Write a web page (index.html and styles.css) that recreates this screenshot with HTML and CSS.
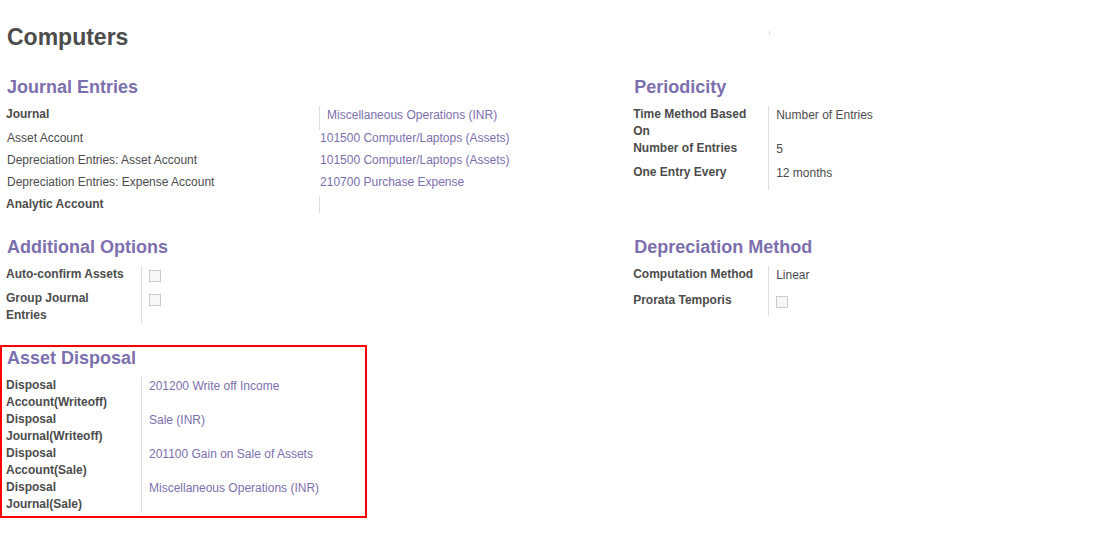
FILE: index.html
```html
<!DOCTYPE html>
<html lang="en">
<head>
<meta charset="utf-8">
<title>Computers</title>
<link rel="stylesheet" href="styles.css">
</head>
<body>
<main class="sheet">
  <header class="columns sheet-header">
    <h1 class="title">Computers</h1>
    <div class="empty-group"></div>
  </header>
  <div class="columns groups">
    <section class="group group-wide">
      <h2 class="group-title">Journal Entries</h2>
      <dl class="fields">
        <div class="field"><dt class="label">Journal</dt><dd class="value"><a class="link" href="#">Miscellaneous Operations (INR)</a></dd></div>
        <div class="field field-plain"><dt class="label">Asset Account</dt><dd class="value"><a class="link" href="#">101500 Computer/Laptops (Assets)</a></dd></div>
        <div class="field field-plain"><dt class="label">Depreciation Entries: Asset Account</dt><dd class="value"><a class="link" href="#">101500 Computer/Laptops (Assets)</a></dd></div>
        <div class="field field-plain"><dt class="label">Depreciation Entries: Expense Account</dt><dd class="value"><a class="link" href="#">210700 Purchase Expense</a></dd></div>
        <div class="field field-empty"><dt class="label">Analytic Account</dt><dd class="value"></dd></div>
      </dl>
    </section>
    <section class="group">
      <h2 class="group-title">Periodicity</h2>
      <dl class="fields">
        <div class="field"><dt class="label">Time Method Based On</dt><dd class="value">Number of Entries</dd></div>
        <div class="field"><dt class="label">Number of Entries</dt><dd class="value">5</dd></div>
        <div class="field field-tall"><dt class="label">One Entry Every</dt><dd class="value">12 months</dd></div>
      </dl>
    </section>
    <section class="group">
      <h2 class="group-title">Additional Options</h2>
      <div class="fields">
        <div class="field"><label class="label" for="auto-confirm">Auto-confirm Assets</label><div class="value"><input class="check" type="checkbox" id="auto-confirm"></div></div>
        <div class="field"><label class="label" for="group-journal">Group Journal Entries</label><div class="value"><input class="check" type="checkbox" id="group-journal"></div></div>
      </div>
    </section>
    <section class="group">
      <h2 class="group-title">Depreciation Method</h2>
      <div class="fields">
        <div class="field field-tall"><span class="label">Computation Method</span><div class="value">Linear</div></div>
        <div class="field"><label class="label" for="prorata">Prorata Temporis</label><div class="value"><input class="check" type="checkbox" id="prorata"></div></div>
      </div>
    </section>
    <section class="group group-marked">
      <h2 class="group-title">Asset Disposal</h2>
      <dl class="fields">
        <div class="field"><dt class="label">Disposal Account(Writeoff)</dt><dd class="value"><a class="link" href="#">201200 Write off Income</a></dd></div>
        <div class="field"><dt class="label">Disposal Journal(Writeoff)</dt><dd class="value"><a class="link" href="#">Sale (INR)</a></dd></div>
        <div class="field"><dt class="label">Disposal Account(Sale)</dt><dd class="value"><a class="link" href="#">201100 Gain on Sale of Assets</a></dd></div>
        <div class="field"><dt class="label">Disposal Journal(Sale)</dt><dd class="value"><a class="link" href="#">Miscellaneous Operations (INR)</a></dd></div>
      </dl>
    </section>
  </div>
</main>
</body>
</html>
```
FILE: styles.css
```css
* {
  box-sizing: border-box;
}

body {
  margin: 0;
  background: #fff;
  color: #4c4c4c;
  font: 12px/17px "Liberation Sans", Arial, sans-serif;
}

.sheet {
  padding: 23px 0 16px 6px;
}

.columns {
  display: grid;
  grid-template-columns: 30fr 23fr;
}

.sheet-header {
  margin-bottom: 25px;
}

.title {
  margin: 0;
  padding-left: 1px;
  font-size: 23px;
  line-height: 28px;
}

.empty-group {
  height: 4px;
  margin: 8px 0 0 136px;
  border-left: 1px solid #ddd;
}

.groups {
  row-gap: 23px;
  align-items: start;
}

.group-title {
  margin: 0 0 8px;
  padding-left: 1px;
  color: #7c6fae;
  font-size: 18px;
  line-height: 22px;
}

.fields {
  margin: 0;
}

.field {
  display: grid;
  grid-template-columns: 135px 1fr;
  min-height: 24px;
}

.group-wide .field {
  grid-template-columns: 1fr 1fr;
  padding-right: 1px;
}

.label {
  padding-right: 12px;
  font-weight: bold;
}

.value {
  margin: 0;
  padding-left: 7px;
  border-left: 1px solid #ddd;
  line-height: 19px;
}

.field-plain {
  min-height: 22px;
}

.field-plain .label {
  padding-left: 1px;
  font-weight: normal;
}

.field-plain .value {
  padding-left: 1px;
  border-left: 0;
  line-height: 17px;
}

.field-empty {
  min-height: 17px;
}

.field-tall {
  min-height: 26px;
}

.link {
  color: #7c6fae;
  text-decoration: none;
}

.check {
  display: block;
  appearance: none;
  width: 12px;
  height: 12px;
  margin: 4px 0 0;
  border: 1px solid #ccc;
  background: #f7f7f7;
}

.check:checked {
  background: #7c6fae;
}

.group-marked {
  width: 367px;
  max-width: 100%;
  margin: -2px 0 0 -6px;
  padding: 0 4px 3px;
  border: 2px solid #f00;
}
```
